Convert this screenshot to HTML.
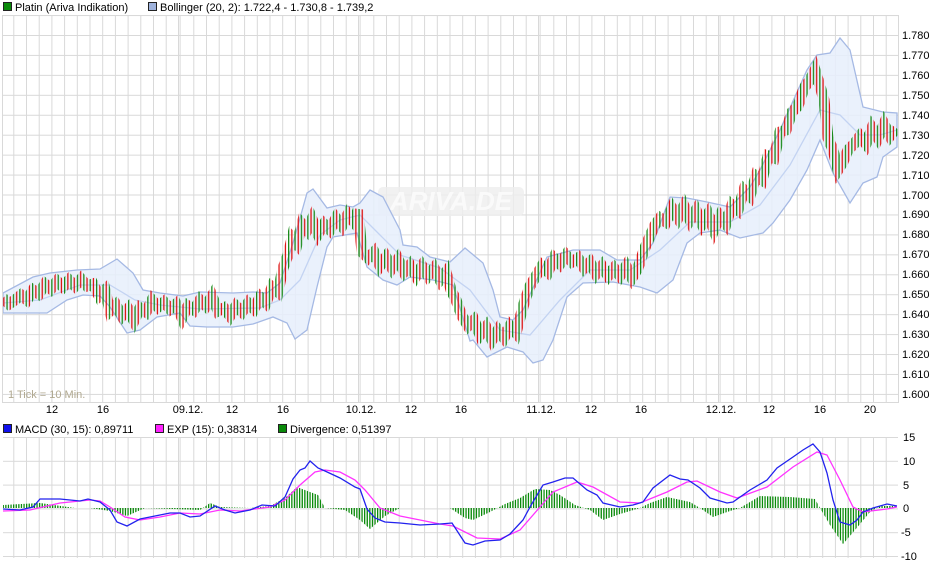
<!DOCTYPE html>
<html><head><meta charset="utf-8"><style>
html,body{margin:0;padding:0;background:#fff;width:940px;height:566px;overflow:hidden}
svg{display:block}
text{font-family:"Liberation Sans",Arial,sans-serif;font-size:11px;fill:#000}
</style></head><body>
<svg width="940" height="566" viewBox="0 0 940 566" xmlns="http://www.w3.org/2000/svg">
<defs>
<pattern id="vg" patternUnits="userSpaceOnUse" x="-2" y="0" width="180" height="600">
<g fill="#d9d9d9">
<rect x="0" y="0" width="1" height="600"/><rect x="1.6" y="0" width="1" height="600"/>
<rect x="15.3" width="1" height="600"/><rect x="28" width="1" height="600"/><rect x="40.7" width="1" height="600"/><rect x="53.4" width="1" height="600"/><rect x="66.1" width="1" height="600"/><rect x="78.8" width="1" height="600"/><rect x="91.5" width="1" height="600"/><rect x="104.2" width="1" height="600"/><rect x="116.9" width="1" height="600"/><rect x="129.6" width="1" height="600"/><rect x="142.3" width="1" height="600"/><rect x="155" width="1" height="600"/><rect x="167.7" width="1" height="600"/>
</g></pattern>
<pattern id="hg" patternUnits="userSpaceOnUse" x="0" y="35" width="940" height="19.94"><rect x="0" y="0" width="940" height="1" fill="#d9d9d9"/></pattern>
<pattern id="hg2" patternUnits="userSpaceOnUse" x="0" y="437" width="940" height="23.8"><rect x="0" y="0" width="940" height="1" fill="#d9d9d9"/></pattern>
<pattern id="bars" patternUnits="userSpaceOnUse" x="0" y="0" width="6.4" height="10"><rect x="0" y="0" width="1.3" height="10" fill="#1a8a1a"/><rect x="3.2" y="0" width="1.3" height="10" fill="#dd1111"/></pattern>
<pattern id="hist" patternUnits="userSpaceOnUse" x="0" y="0" width="2.6" height="10"><rect x="0" y="0" width="1.3" height="10" fill="#0a8a0a"/></pattern>
<clipPath id="c1"><rect x="3" y="16" width="895" height="386"/></clipPath>
<clipPath id="c2"><rect x="3" y="437" width="895" height="120"/></clipPath>
</defs>

<rect x="3.5" y="2.5" width="8" height="8" fill="#0a8a0a" stroke="#222"/>
<text x="15" y="11">Platin (Ariva Indikation)</text>
<rect x="148.5" y="2.5" width="8" height="8" fill="#9fb3dd" stroke="#222"/>
<text x="160" y="11">Bollinger (20, 2): 1.722,4 - 1.730,8 - 1.739,2</text>

<rect x="3" y="16" width="895" height="386" fill="url(#vg)"/>
<rect x="3" y="16" width="895" height="386" fill="url(#hg)"/>
<rect x="2.5" y="15.5" width="896" height="387" fill="none" stroke="#d9d9d9"/>

<g clip-path="url(#c1)">
<rect x="378" y="187" width="146" height="29" rx="5" fill="#ededed" opacity="0.8"/>
<text x="451" y="210" text-anchor="middle" style="font-size:26px;font-weight:bold;font-style:italic;fill:#fafafa">ARIVA.DE</text>
<polygon fill="#e6eefc" fill-opacity="0.85" stroke="#a5b9e4" stroke-width="1.3" points="3,293 33,277 50,273 77,270 100,269 117,259 133,273 143,290 160,293 183,296 200,292 233,293 253,292 267,293 280,283 293,243 307,193 313,189 327,208 340,205 353,207 360,203 370,190 383,197 400,230 403,245 417,247 430,257 450,262 465,248 483,263 493,290 500,317 513,320 523,310 547,257 573,250 600,250 617,260 640,260 653,243 670,197 687,198 707,202 730,207 750,187 760,170 780,130 807,70 817,55 830,53 840,38 850,50 863,107 883,112 897,113 897,147 883,157 877,177 863,183 850,203 833,173 820,140 807,170 790,200 773,223 763,233 740,238 720,230 700,233 687,243 673,280 657,293 640,287 613,282 583,283 567,297 553,340 543,360 533,363 523,352 507,347 487,357 473,340 470,341 453,285 433,280 410,277 397,285 383,280 367,267 357,233 333,237 327,247 317,287 307,330 295,339 287,323 273,317 253,324 233,327 207,327 190,326 180,313 157,317 140,330 127,333 110,307 100,296 83,295 67,300 47,313 33,313 3,313"/>
<polyline fill="none" stroke="#c3d3f2" stroke-width="1.3" points="3,303 40,300 80,285 110,285 135,300 160,305 200,309 260,308 280,300 300,280 320,235 340,220 360,215 380,235 400,255 440,268 470,290 500,330 530,335 560,300 590,270 630,270 660,250 690,222 730,222 760,205 790,165 820,110 840,115 860,135 880,135 897,130"/>
<polyline fill="none" stroke="url(#bars)" stroke-width="11" stroke-linejoin="miter" points="3,298 9,304 15,300 21,295 27,300 33,290 39,294 45,284 51,289 57,281 63,287 69,280 75,286 81,279 87,286 93,284 99,296 105,290 110,311 116,305 122,316 128,309 134,321 140,308 146,312 152,300 158,307 164,302 170,309 176,304 182,318 188,306 194,310 200,300 206,306 212,296 218,311 224,308 230,316 236,306 242,312 248,303 254,309 260,297 266,303 272,287 278,292 283,268 288,255 292,238 297,244 302,224 307,230 312,219 318,234 324,224 330,230 336,218 342,226 348,214 354,222 358,210 362,252 368,258 374,252 380,266 386,257 392,268 398,259 404,272 410,265 416,276 422,266 428,276 434,268 440,280 446,272 451,290 456,300 462,316 468,326 474,320 480,335 486,327 492,340 498,330 504,338 510,326 516,333 520,318 525,300 530,286 536,276 542,266 548,272 554,258 560,264 566,255 572,262 578,258 584,268 590,262 596,274 602,266 608,276 614,268 620,276 626,266 632,278 638,268 644,250 650,236 655,225 660,218 666,222 672,208 678,218 684,206 690,220 696,210 702,224 708,214 714,230 720,216 726,224 732,205 738,210 744,190 750,196 756,176 762,180 768,156 774,158 780,132 786,130 792,112 798,106 804,88 810,80 815,70 820,86 824,100 828,138 833,150 838,170 843,162 848,150 854,144 860,136 866,144 872,128 878,138 884,124 890,136 896,128"/>
</g>

<text x="8" y="398" style="fill:#b0a890;font-size:11px">1 Tick = 10 Min.</text>

<g style="font-size:11.5px">
<text x="902" y="39">1.780</text><text x="902" y="59">1.770</text><text x="902" y="79">1.760</text><text x="902" y="99">1.750</text><text x="902" y="119">1.740</text><text x="902" y="139">1.730</text><text x="902" y="159">1.720</text><text x="902" y="179">1.710</text><text x="902" y="199">1.700</text><text x="902" y="218">1.690</text><text x="902" y="238">1.680</text><text x="902" y="258">1.670</text><text x="902" y="278">1.660</text><text x="902" y="298">1.650</text><text x="902" y="318">1.640</text><text x="902" y="338">1.630</text><text x="902" y="358">1.620</text><text x="902" y="378">1.610</text><text x="902" y="398">1.600</text>
</g>

<g text-anchor="middle" style="font-size:11.5px">
<text x="52" y="413">12</text><text x="103" y="413">16</text><text x="188" y="413">09.12.</text><text x="232" y="413">12</text><text x="283" y="413">16</text><text x="361" y="413">10.12.</text><text x="411" y="413">12</text><text x="461" y="413">16</text><text x="541" y="413">11.12.</text><text x="591" y="413">12</text><text x="641" y="413">16</text><text x="721" y="413">12.12.</text><text x="769" y="413">12</text><text x="820" y="413">16</text><text x="870" y="413">20</text>
</g>

<rect x="3.5" y="424.5" width="8" height="8" fill="#1010ee" stroke="#222"/>
<text x="15" y="433">MACD (30, 15): 0,89711</text>
<rect x="155.5" y="424.5" width="8" height="8" fill="#ff22ff" stroke="#222"/>
<text x="167" y="433">EXP (15): 0,38314</text>
<rect x="278.5" y="424.5" width="8" height="8" fill="#0a8a0a" stroke="#222"/>
<text x="290" y="433">Divergence: 0,51397</text>

<rect x="3" y="437" width="895" height="121" fill="url(#vg)"/>
<rect x="3" y="437" width="895" height="121" fill="url(#hg2)"/>
<g clip-path="url(#c2)">
<path fill="url(#hist)" d="M3,508 L3,505 L40,503 L75,508 L90,508 L110,511 L127,516 L145,508 L200,510 L210,503 L220,507 L250,508 L270,506 L285,498 L297,487 L310,492 L318,495 L325,508 L345,510 L360,520 L370,529 L385,516 L400,508 L450,508 L465,518 L473,520 L490,512 L505,504 L520,498 L535,489 L550,490 L560,495 L575,505 L590,510 L603,520 L620,514 L640,508 L650,503 L667,497 L690,502 L700,508 L713,517 L730,511 L740,508 L760,496 L790,497 L815,499 L820,508 L830,525 L843,544 L855,530 L870,512 L880,506 L897,506 L897,508 Z"/>
<polyline fill="none" stroke="#ff33ff" stroke-width="1.3" points="3,511 30,510 60,503 90,500 100,501 110,507 125,517 140,520 160,517 180,513 200,514 220,510 240,511 270,507 285,500 300,485 315,472 325,470 340,472 355,480 365,490 380,508 400,516 420,520 440,524 453,526 477,538 500,539 520,530 540,507 553,492 577,482 593,487 620,502 640,503 667,492 687,482 697,481 720,492 737,498 767,487 793,467 817,452 827,455 840,480 853,507 863,512 887,509 897,507"/>
<polyline fill="none" stroke="#2222ee" stroke-width="1.3" points="3,509 20,510 33,507 40,499 60,499 80,501 88,499 100,502 110,510 117,522 127,526 140,519 155,516 170,513 180,513 190,517 200,516 215,506 225,510 235,513 250,510 262,505 275,506 285,497 293,479 300,470 305,468 310,461 318,468 325,471 340,478 355,487 360,489 367,509 375,518 385,522 400,523 420,525 440,524 452,523 465,543 473,545 485,541 500,540 510,534 523,520 530,507 543,485 553,482 565,478 573,478 587,490 597,495 603,503 620,507 633,505 643,502 653,488 670,475 680,479 688,480 700,488 710,498 727,503 733,502 750,490 767,480 777,468 793,457 803,450 813,444 820,452 827,473 833,500 840,522 850,525 857,520 863,512 873,508 887,504 897,506"/>
</g>
<g style="font-size:11.5px">
<text x="903" y="441">15</text><text x="903" y="465">10</text><text x="903" y="489">5</text><text x="903" y="512">0</text><text x="901" y="536">-5</text><text x="901" y="560">-10</text>
</g>
</svg>
</body></html>
